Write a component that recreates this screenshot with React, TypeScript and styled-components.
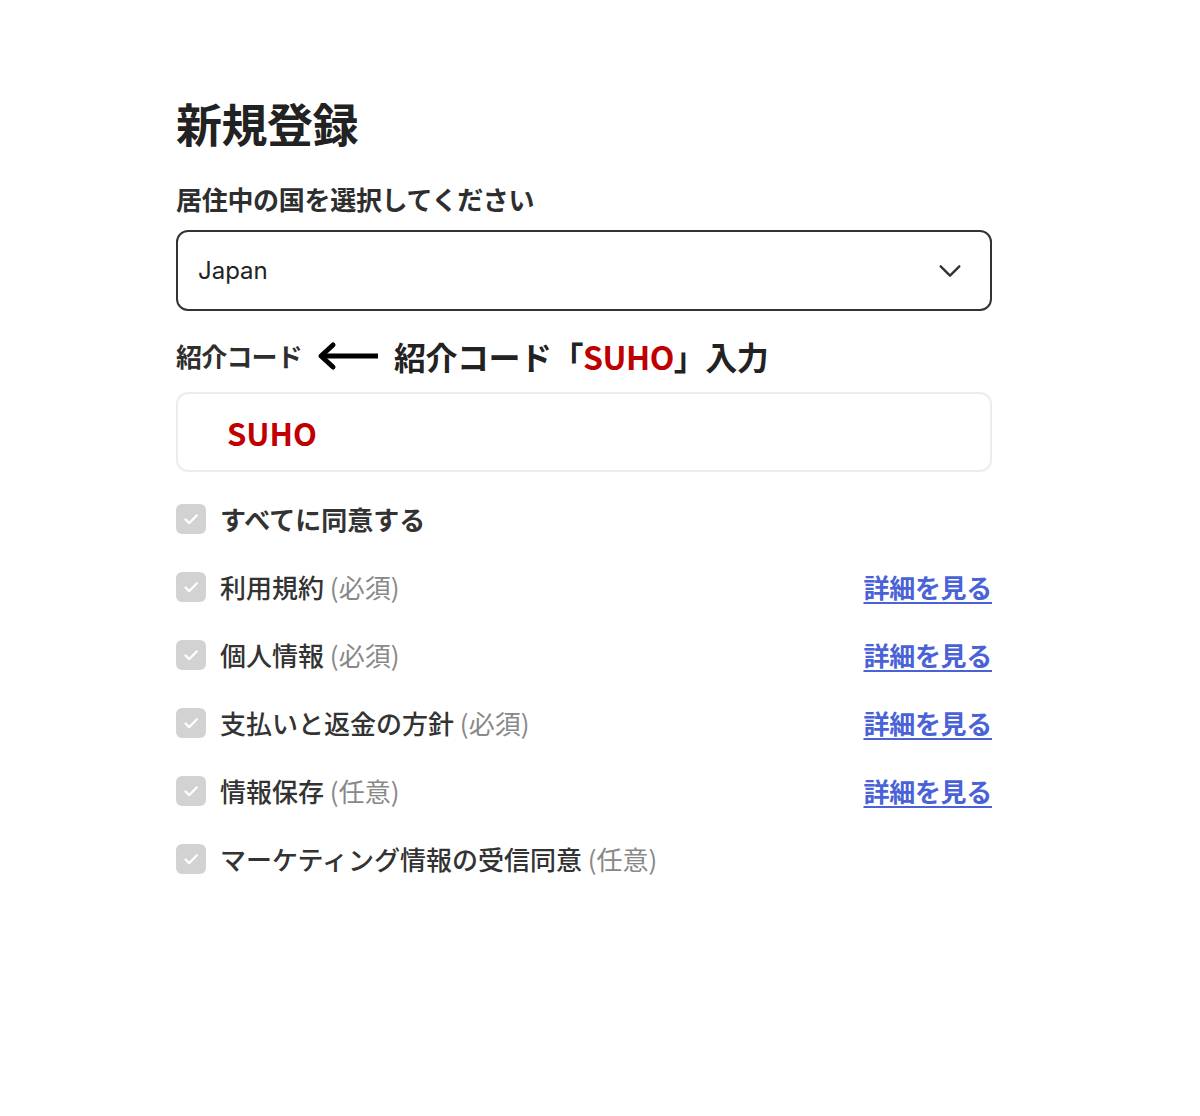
import styled, { createGlobalStyle } from 'styled-components';

const GlobalStyle = createGlobalStyle`
  html, body {
    margin: 0;
    padding: 0;
    background: #ffffff;
  }
  body {
    font-family: Inter, "Noto Sans CJK JP", sans-serif;
    color: #222222;
  }
`;

type Agreement = {
  label: string;
  note?: string;
  link?: boolean;
  bold?: boolean;
};

const agreements: Agreement[] = [
  { label: 'すべてに同意する', bold: true },
  { label: '利用規約', note: '(必須)', link: true },
  { label: '個人情報', note: '(必須)', link: true },
  { label: '支払いと返金の方針', note: '(必須)', link: true },
  { label: '情報保存', note: '(任意)', link: true },
  { label: 'マーケティング情報の受信同意', note: '(任意)' },
];

export default function App() {
  return (
    <>
      <GlobalStyle />
      <Page>
        <Form>
          <Title>新規登録</Title>

          <FieldLabel>居住中の国を選択してください</FieldLabel>
          <SelectBox>
            <SelectValue>Japan</SelectValue>
            <svg width="28" height="28" viewBox="0 0 24 24" fill="none">
              <path d="M4 8l8 8 8-8" stroke="#333" strokeWidth="2" strokeLinecap="round" strokeLinejoin="round" />
            </svg>
          </SelectBox>

          <LabelRow>
            <FieldLabel as="span">紹介コード</FieldLabel>
            <svg width="64" height="30" viewBox="0 0 64 30" fill="none">
              <path d="M62 15H6" stroke="#000" strokeWidth="5" />
              <path d="M17 4L5 15l12 11" stroke="#000" strokeWidth="5" strokeLinecap="round" strokeLinejoin="round" />
            </svg>
            <Annotation>
              紹介コード「<Red>SUHO</Red>」入力
            </Annotation>
          </LabelRow>
          <CodeBox>
            <CodeValue>SUHO</CodeValue>
          </CodeBox>

          <AgreeList>
            {agreements.map((a) => (
              <AgreeRow key={a.label}>
                <CheckLabel>
                  <CheckBox>
                    <svg width="22" height="22" viewBox="0 0 24 24" fill="none">
                      <path d="M6 12.5l4 4L18.5 8" stroke="#fff" strokeWidth="2.4" strokeLinecap="round" strokeLinejoin="round" />
                    </svg>
                  </CheckBox>
                  <AgreeText $bold={a.bold}>
                    {a.label}
                    {a.note && <Note> {a.note}</Note>}
                  </AgreeText>
                </CheckLabel>
                {a.link && <DetailLink href="#">詳細を見る</DetailLink>}
              </AgreeRow>
            ))}
          </AgreeList>
        </Form>
      </Page>
    </>
  );
}

const Page = styled.div`
  width: 1200px;
  min-height: 1116px;
  padding-top: 90px;
  box-sizing: border-box;
`;

const Form = styled.div`
  width: 816px;
  margin-left: 176px;
  display: flex;
  flex-direction: column;
`;

const Title = styled.h1`
  margin: 0;
  font-family: "Noto Sans CJK JP", sans-serif;
  font-size: 46px;
  line-height: 64px;
  font-weight: 700;
  color: #222;
  letter-spacing: -0.5px;
`;

const FieldLabel = styled.div`
  margin-top: 28px;
  font-family: "Noto Sans CJK JP", sans-serif;
  font-size: 26px;
  line-height: 34px;
  font-weight: 700;
  color: #2e2e2e;
  letter-spacing: -0.3px;
`;

const SelectBox = styled.div`
  margin-top: 14px;
  height: 81px;
  box-sizing: border-box;
  border: 2px solid #333;
  border-radius: 12px;
  padding: 0 26px 0 20px;
  display: flex;
  align-items: center;
  justify-content: space-between;
`;

const SelectValue = styled.span`
  font-family: Inter, "Noto Sans CJK JP", sans-serif;
  font-size: 24px;
  color: #222;
`;

const LabelRow = styled.div`
  margin-top: 25px;
  display: flex;
  align-items: center;
  height: 40px;

  & > span:first-child {
    margin-top: 0;
    margin-right: 14px;
    letter-spacing: -0.8px;
  }

  & > svg {
    margin-right: 14px;
  }
`;

const Annotation = styled.span`
  font-family: "Noto Sans CJK JP", sans-serif;
  font-size: 32px;
  font-weight: 700;
  color: #222;
  letter-spacing: -0.5px;
`;

const Red = styled.span`
  color: #c00000;
`;

const CodeBox = styled.div`
  margin-top: 16px;
  height: 80px;
  box-sizing: border-box;
  border: 2px solid #ececec;
  border-radius: 12px;
  padding-left: 49px;
  display: flex;
  align-items: center;
`;

const CodeValue = styled.span`
  font-family: "Noto Sans CJK JP", sans-serif;
  font-size: 31px;
  font-weight: 700;
  color: #c00000;
`;

const AgreeList = styled.div`
  margin-top: 26px;
  display: flex;
  flex-direction: column;
  gap: 28px;
`;

const AgreeRow = styled.div`
  height: 40px;
  display: flex;
  align-items: center;
  justify-content: space-between;
`;

const CheckLabel = styled.label`
  display: flex;
  align-items: center;
  gap: 14px;
`;

const CheckBox = styled.span`
  width: 30px;
  height: 30px;
  margin-top: 2px;
  border-radius: 6px;
  background: #d2d2d2;
  display: flex;
  align-items: center;
  justify-content: center;
`;

const AgreeText = styled.span<{ $bold?: boolean }>`
  font-family: "Noto Sans CJK JP", sans-serif;
  font-size: 26px;
  font-weight: ${(p) => (p.$bold ? 700 : 500)};
  color: #333;
`;

const Note = styled.span`
  font-weight: 400;
  color: #888;
`;

const DetailLink = styled.a`
  font-family: "Noto Sans CJK JP", sans-serif;
  font-size: 26px;
  font-weight: 700;
  color: #4a62d8;
  text-decoration: underline;
  text-underline-offset: 4px;
  letter-spacing: -0.3px;
`;
